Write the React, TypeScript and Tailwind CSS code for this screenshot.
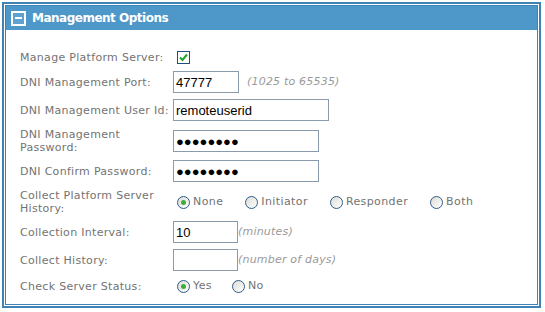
import React from 'react';

const labelCls = 'w-[153px] shrink-0 text-[11px] leading-[13px] tracking-[0.3px] text-[#737373]';
const inputCls =
  'h-[22px] border border-[#8a9bab] bg-white px-[2px] text-[13px] text-black outline-none font-["Liberation_Sans",Arial,sans-serif]';
const hintCls = 'text-[11px] italic tracking-[0.2px] text-[#9a9a9a]';

function Radio({ checked }: { checked?: boolean }) {
  return (
    <span className="flex h-[13px] w-[13px] shrink-0 items-center justify-center rounded-full border border-[#2f5d8a] bg-gradient-to-br from-[#dcdcd6] to-white">
      {checked && <span className="h-[5px] w-[5px] rounded-full bg-[#3fae35]" />}
    </span>
  );
}

function RadioItem({ label, checked, className }: { label: string; checked?: boolean; className?: string }) {
  return (
    <span className={`flex items-center gap-[3px] ${className ?? ''}`}>
      <Radio checked={checked} />
      <span className="text-[11px] tracking-[0.4px] text-[#737373]">{label}</span>
    </span>
  );
}

function Row({ h, label, children }: { h: string; label: React.ReactNode; children: React.ReactNode }) {
  return (
    <div className={`flex items-center ${h}`}>
      <div className={labelCls}>{label}</div>
      <div className="flex items-center">{children}</div>
    </div>
  );
}

export default function App() {
  return (
    <div className="h-[312px] w-[545px] bg-white pl-[2px] pt-[2px] font-['DejaVu_Sans',Verdana,sans-serif]">
      <div className="h-[306px] w-[539px] border-2 border-[#3f83b6] p-px">
        <div className="h-full border border-[#3f83b6]">
          <div className="flex h-[24px] items-center gap-[6px] bg-[#4e97c9] pl-[5px]">
            <span className="flex h-[15px] w-[15px] items-center justify-center border-2 border-white bg-[#5fa2d0]">
              <span className="h-[2px] w-[7px] bg-white" />
            </span>
            <span className="text-[12px] font-bold tracking-[-0.5px] text-white">Management Options</span>
          </div>

          <div className="pl-[14px] pt-[15px]">
            <Row h="h-[24px]" label="Manage Platform Server:">
              <span className="ml-[4px] flex h-[13px] w-[13px] items-center justify-center border border-[#1f4f7d] bg-white">
                <svg width="9" height="9" viewBox="0 0 9 9">
                  <path d="M1 4.5 L3.5 7 L8 1.5" fill="none" stroke="#21a32b" strokeWidth="2" />
                </svg>
              </span>
            </Row>
            <Row h="h-[26px]" label="DNI Management Port:">
              <input className={`${inputCls} w-[66px]`} defaultValue="47777" readOnly />
              <span className={`${hintCls} ml-[8px]`}>(1025 to 65535)</span>
            </Row>
            <Row h="h-[30px]" label="DNI Management User Id:">
              <input className={`${inputCls} w-[156px]`} defaultValue="remoteuserid" readOnly />
            </Row>
            <Row h="h-[32px]" label={<>DNI Management<br />Password:</>}>
              <input className={`${inputCls} w-[146px]`} defaultValue="●●●●●●●●" readOnly />
            </Row>
            <Row h="h-[28px]" label="DNI Confirm Password:">
              <input className={`${inputCls} w-[146px]`} defaultValue="●●●●●●●●" readOnly />
            </Row>
            <Row h="h-[34px]" label={<>Collect Platform Server<br />History:</>}>
              <RadioItem label="None" checked className="ml-[4px]" />
              <RadioItem label="Initiator" className="ml-[22px]" />
              <RadioItem label="Responder" className="ml-[22px]" />
              <RadioItem label="Both" className="ml-[22px]" />
            </Row>
            <Row h="h-[26px]" label="Collection Interval:">
              <input className={`${inputCls} w-[65px]`} defaultValue="10" readOnly />
              <span className={hintCls}>(minutes)</span>
            </Row>
            <Row h="h-[30px]" label="Collect History:">
              <input className={`${inputCls} w-[65px]`} defaultValue="" readOnly />
              <span className={hintCls}>(number of days)</span>
            </Row>
            <Row h="h-[22px]" label="Check Server Status:">
              <RadioItem label="Yes" checked className="ml-[4px]" />
              <RadioItem label="No" className="ml-[20px]" />
            </Row>
          </div>
        </div>
      </div>
    </div>
  );
}
